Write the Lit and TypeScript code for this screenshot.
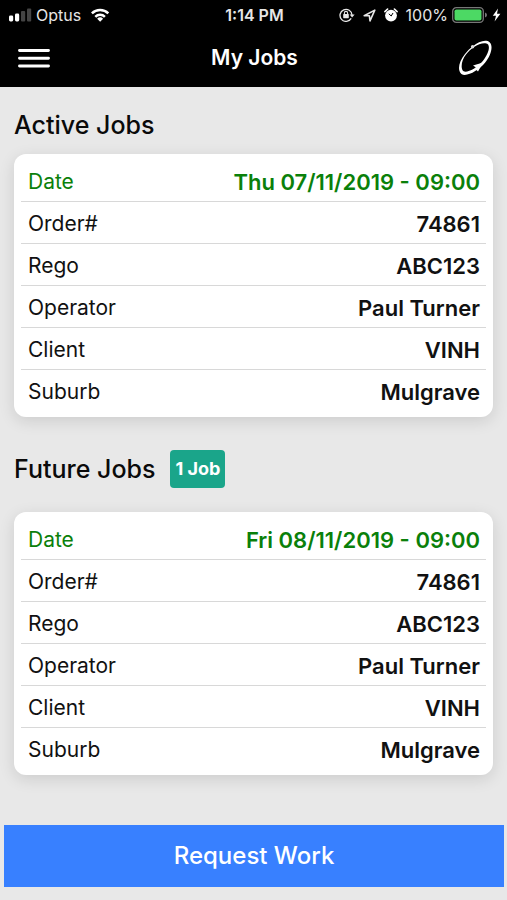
import { LitElement, html, css } from "lit";
import { customElement, property } from "lit/decorators.js";

interface Job {
  date: string;
  order: string;
  rego: string;
  operator: string;
  client: string;
  suburb: string;
}

const shared = { order: "74861", rego: "ABC123", operator: "Paul Turner", client: "VINH", suburb: "Mulgrave" };
const activeJobs: Job[] = [{ date: "Thu 07/11/2019 - 09:00", ...shared }];
const futureJobs: Job[] = [{ date: "Fri 08/11/2019 - 09:00", ...shared }];

@customElement("status-bar")
class StatusBar extends LitElement {
  static styles = css`
    :host {
      display: grid;
      grid-template-columns: 1fr auto 1fr;
      align-items: center;
      height: 30px;
      padding: 0 6px 0 8px;
      color: #e6e6e6;
      font-size: 16px;
      line-height: 20px;
    }
    .side { display: flex; align-items: center; gap: 4px; }
    .end { justify-content: flex-end; gap: 8px; }
    .time { font-weight: 600; }
    .power { display: flex; align-items: center; gap: 4px; }
    svg { display: block; flex: none; }
  `;

  render() {
    return html`
      <div class="side">
        <svg width="24" height="14" viewBox="0 0 24 14" aria-hidden="true">
          <rect x="1" y="7.5" width="4.2" height="6" rx="1.4" fill="#fff" />
          <rect x="7" y="5.5" width="4.2" height="8" rx="1.4" fill="#fff" />
          <rect x="13" y="3" width="4.2" height="10.5" rx="1" fill="#444" />
          <rect x="19" y="0.5" width="4.2" height="13" rx="1" fill="#444" />
        </svg>
        <span>Optus</span>
        <svg width="28" height="14" viewBox="-6 0 28 14" aria-hidden="true">
          <g fill="none" stroke="#fff" stroke-width="2.5">
            <path d="M0.9 5.4a11.6 11.6 0 0 1 16.4 0" />
            <path d="M4.3 8.8a6.8 6.8 0 0 1 9.6 0" />
          </g>
          <path d="M9.1 13.8L6.1 10.8a4.3 4.3 0 0 1 6 0z" fill="#fff" />
        </svg>
      </div>
      <span class="time">1:14 PM</span>
      <div class="side end">
        <svg width="16" height="14" viewBox="0 0 16 14" aria-hidden="true">
          <path d="M12.2 10.4A6 6 0 1 1 13 7" fill="none" stroke="#e6e6e6" stroke-width="1.3" />
          <path d="M10.6 6.4h5l-2.5 3.2z" fill="#e6e6e6" />
          <rect x="4.2" y="6" width="5.6" height="4.2" rx="0.6" fill="#e6e6e6" />
          <path d="M5.4 6.2V5a1.6 1.6 0 0 1 3.2 0v1.2" fill="none" stroke="#e6e6e6" stroke-width="1.1" />
        </svg>
        <svg width="13" height="13" viewBox="0 0 13 13" aria-hidden="true">
          <path d="M1.2 6.7L11.8 1.1L7 11.8L6.4 6.8z" fill="none" stroke="#e6e6e6" stroke-width="1.6" stroke-linejoin="round" />
        </svg>
        <svg width="14" height="14" viewBox="0 0 14 14" aria-hidden="true">
          <circle cx="7" cy="7.6" r="5.9" fill="#fff" />
          <path d="M0.9 3.6L3.6 1M13.1 3.6L10.4 1" stroke="#fff" stroke-width="1.6" stroke-linecap="round" />
          <path d="M4.8 5.8L7.2 8L9 5" fill="none" stroke="#000" stroke-width="1" />
        </svg>
        <span class="power">
          <span>100%</span>
          <svg width="36" height="16" viewBox="0 0 36 16" aria-hidden="true">
            <rect x="0.7" y="0.7" width="30.6" height="14.6" rx="3.6" fill="none" stroke="#777" stroke-width="1.3" />
            <rect x="2.5" y="2.5" width="27" height="11" rx="1.8" fill="#4cd964" />
            <path d="M33 5.6q2 .6 2 2.4t-2 2.4z" fill="#777" />
          </svg>
          <svg width="9" height="14" viewBox="0 0 9 14" aria-hidden="true">
            <path d="M6 0.6L0.8 7.8H4L2.6 13.4L8.4 5.8H5z" fill="#fff" />
          </svg>
        </span>
      </div>
    `;
  }
}

@customElement("app-header")
class AppHeader extends LitElement {
  static styles = css`
    :host {
      display: grid;
      grid-template-columns: 1fr auto 1fr;
      align-items: center;
      height: 56px;
      padding: 0 14px 0 16px;
      color: #fff;
    }
    h1 { margin: 0; font-size: 21px; line-height: 28px; font-weight: 600; }
    button { display: block; padding: 0; border: 0; background: none; color: inherit; cursor: pointer; }
    .refresh { justify-self: end; }
    svg { display: block; }
  `;

  render() {
    return html`
      <button class="menu" aria-label="Open menu">
        <svg width="36" height="24" viewBox="0 0 36 24">
          <path d="M3.5 4.5h29M3.5 12.2h29M3.5 20h29" stroke="#fff" stroke-width="2.9" stroke-linecap="round" />
        </svg>
      </button>
      <h1>My Jobs</h1>
      <button class="refresh" aria-label="Refresh">
        <svg width="36" height="36" viewBox="0 0 36 36">
          <path
            fill="#fff"
            fill-rule="evenodd"
            d="M16 6.2C21.4 1.6 28.8 -0.8 32.6 2.2C36.6 6 34 15.6 28.2 22.6C21.6 30.6 9.6 37.4 4.4 34C0 30.4 2 21.4 7.8 14.2C10.4 10.8 12.8 8.6 16 6.2ZM17 7.1C13.6 9.4 11.3 11.6 9 14.6C4.4 20.6 3.2 28.6 6.6 31.2C9.8 33.2 19.8 28.4 25.8 21C31.2 14.2 33.4 6.8 30.8 4.2C28.4 2 21.8 3.4 17 7.1Z"
          />
          <path d="M26 22.4L16 25.6L19 27.4L18.4 29L21 31.6L23 28Z" fill="#fff" />
          <circle cx="15.6" cy="6.8" r="1.7" fill="#ddd" />
        </svg>
      </button>
    `;
  }
}

@customElement("job-card")
class JobCard extends LitElement {
  @property({ attribute: false }) job!: Job;

  static styles = css`
    :host { display: block; }
    dl {
      margin: 0;
      padding: 6px 7px;
      border-radius: 12px;
      background: #fff;
      box-shadow: 0 4px 16px rgba(0, 0, 0, 0.12);
      color: #111;
      font-size: 21px;
      line-height: 28px;
    }
    .row {
      display: flex;
      justify-content: space-between;
      padding: 8px 6px 5px 7px;
      border-bottom: 1px solid #d8d8d8;
    }
    .row:last-child { border-bottom: 0; }
    .date { color: #0a800a; }
    dt, dd { margin: 0; }
    dd { font-size: 22px; font-weight: 600; text-align: right; }
  `;

  render() {
    const { date, order, rego, operator, client, suburb } = this.job;
    const rows = [
      ["Date", date],
      ["Order#", order],
      ["Rego", rego],
      ["Operator", operator],
      ["Client", client],
      ["Suburb", suburb],
    ];
    return html`<dl>
      ${rows.map(
        ([label, value], i) =>
          html`<div class="row ${i === 0 ? "date" : ""}"><dt>${label}</dt><dd>${value}</dd></div>`
      )}
    </dl>`;
  }
}

@customElement("app-root")
class AppRoot extends LitElement {
  static styles = css`
    :host {
      display: flex;
      flex-direction: column;
      min-height: 100vh;
      background: #e8e8e8;
      color: #0a0a0a;
      font-family: Inter, "Liberation Sans", sans-serif;
    }
    .top { background: #000; padding-bottom: 1px; }
    main { flex: 1; padding: 0 14px; }
    .heading { display: flex; align-items: center; gap: 15px; }
    .heading h2 { margin: 0; font-size: 25px; line-height: 32px; font-weight: 500; }
    .active { padding: 22px 0 13px; }
    .future { padding: 33px 0 24px; }
    .badge {
      padding: 5px;
      border-radius: 4px;
      background: #1aa58a;
      color: #fff;
      font-size: 18px;
      line-height: 28px;
      font-weight: 700;
    }
    footer { padding: 24px 3px 13px 4px; }
    .request {
      display: block;
      width: 100%;
      padding: 15px;
      border: 0;
      background: #3880ff;
      color: #fff;
      font-family: inherit;
      font-size: 24px;
      line-height: 32px;
      font-weight: 500;
      cursor: pointer;
    }
  `;

  render() {
    return html`
      <div class="top">
        <status-bar></status-bar>
        <app-header></app-header>
      </div>
      <main>
        <section>
          <div class="heading active"><h2>Active Jobs</h2></div>
          ${activeJobs.map((job) => html`<job-card .job=${job}></job-card>`)}
        </section>
        <section>
          <div class="heading future">
            <h2>Future Jobs</h2>
            <span class="badge">${futureJobs.length} Job</span>
          </div>
          ${futureJobs.map((job) => html`<job-card .job=${job}></job-card>`)}
        </section>
      </main>
      <footer><button class="request">Request Work</button></footer>
    `;
  }
}
